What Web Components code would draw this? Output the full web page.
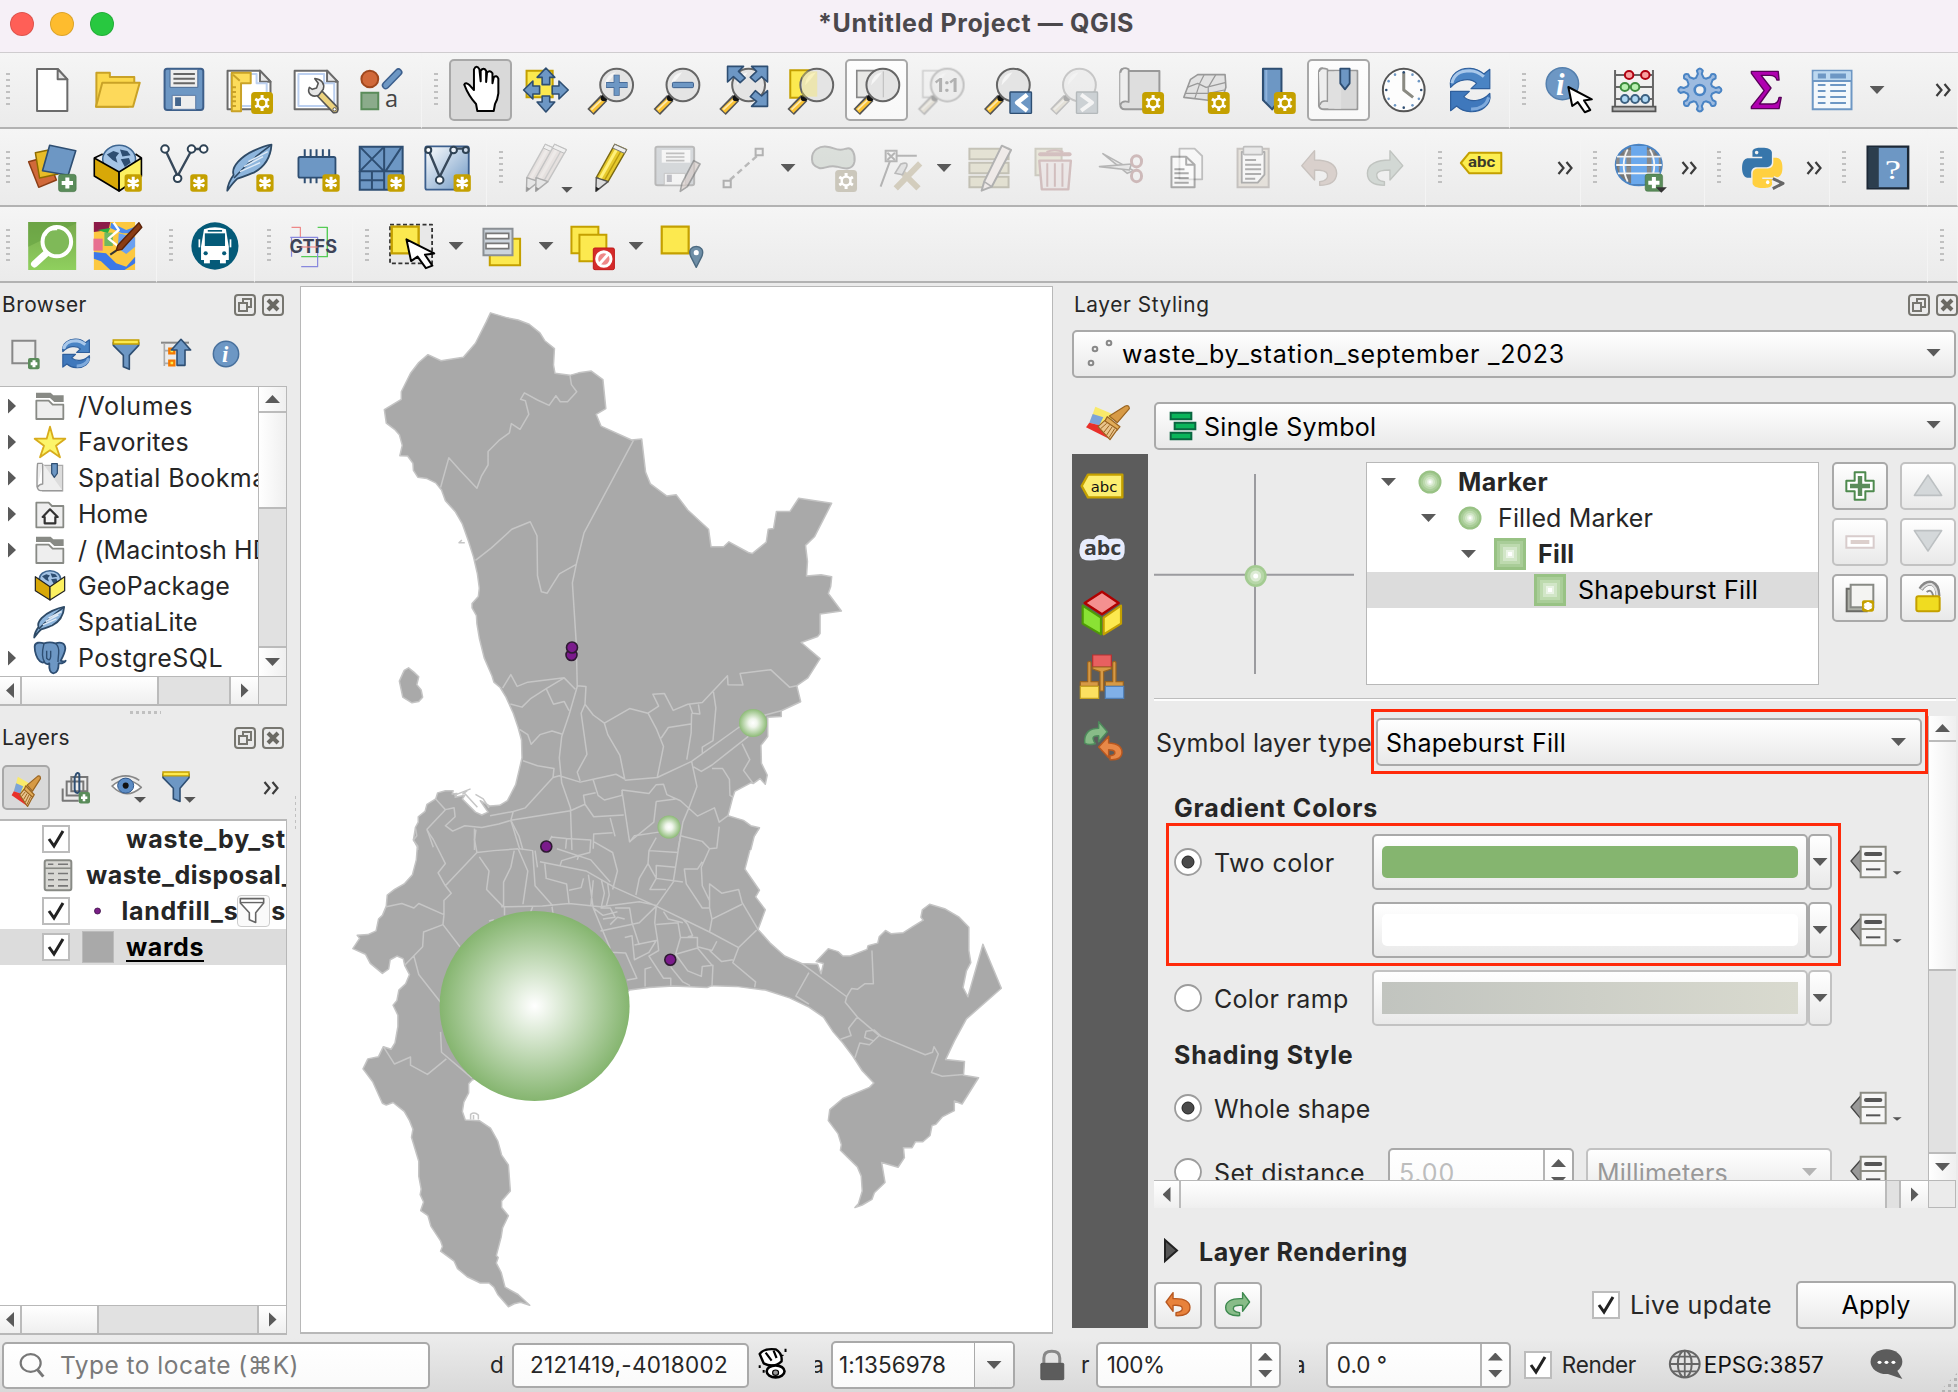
<!DOCTYPE html>
<html lang="en">
<head>
<meta charset="utf-8">
<title>*Untitled Project — QGIS</title>
<style>
html,body{margin:0;padding:0}
body{width:1958px;height:1392px;overflow:hidden;background:#ebebeb;font-family:Inter,"Liberation Sans",sans-serif;color:#262626;display:flex;flex-direction:column}
.row{display:flex;flex:none}
.main{display:flex;height:1055px;flex:none}
</style>
</head>
<body>
<title-bar></title-bar>
<div class="row" style="--h:76px">
  <q-toolbar first style="width:422px">
    <q-tool i="new"></q-tool><q-tool i="open"></q-tool><q-tool i="save"></q-tool><q-tool i="layout"></q-tool><q-tool i="manager"></q-tool><q-tool i="style"></q-tool>
  </q-toolbar>
  <q-toolbar style="width:1088px">
    <q-tool i="hand" state="down"></q-tool><q-tool i="pan"></q-tool><q-tool i="zin"></q-tool><q-tool i="zout"></q-tool><q-tool i="zfull"></q-tool><q-tool i="zsel"></q-tool><q-tool i="zlayer" state="on"></q-tool><q-tool i="znative"></q-tool><q-tool i="zlast"></q-tool><q-tool i="znext"></q-tool><q-tool i="newmap"></q-tool><q-tool i="new3d"></q-tool><q-tool i="newbm"></q-tool><q-tool i="bm" state="on"></q-tool><q-tool i="clock"></q-tool><q-tool i="refresh"></q-tool>
  </q-toolbar>
  <q-toolbar style="width:448px">
    <q-tool i="identify"></q-tool><q-tool i="abacus"></q-tool><q-tool i="gear"></q-tool><q-tool i="sigma"></q-tool><q-tool i="table"></q-tool><q-drop></q-drop><q-more slot="end" style="margin-right:5px"></q-more>
  </q-toolbar>
</div>
<div class="row" style="--h:78px;--p:2px">
  <q-toolbar first style="width:487px">
    <q-tool i="dsm"></q-tool><q-tool i="gpkg"></q-tool><q-tool i="shp"></q-tool><q-tool i="feather"></q-tool><q-tool i="chip"></q-tool><q-tool i="mesh"></q-tool><q-tool i="vlayer"></q-tool>
  </q-toolbar>
  <q-toolbar style="width:939px">
    <q-tool i="pencils"></q-tool><q-tool i="pencil"></q-tool><q-tool i="saveedit"></q-tool><q-tool i="digit"></q-tool><q-drop></q-drop><q-tool i="poly"></q-tool><q-tool i="vertex"></q-tool><q-drop></q-drop><q-tool i="multi"></q-tool><q-tool i="trash"></q-tool><q-tool i="cut"></q-tool><q-tool i="copy"></q-tool><q-tool i="paste"></q-tool><q-tool i="undo"></q-tool><q-tool i="redo"></q-tool>
  </q-toolbar>
  <q-toolbar style="width:155px"><q-tool i="label"></q-tool><q-more slot="end"></q-more></q-toolbar>
  <q-toolbar style="width:124px"><q-tool i="globe"></q-tool><q-more slot="end"></q-more></q-toolbar>
  <q-toolbar style="width:125px"><q-tool i="python"></q-tool><q-more slot="end"></q-more></q-toolbar>
  <q-toolbar style="width:98px"><q-tool i="help"></q-tool></q-toolbar>
  <q-toolbar style="width:30px"></q-toolbar>
</div>
<div class="row" style="--h:76px;--p:4px">
  <q-toolbar first style="width:157px"><q-tool i="osm"></q-tool><q-tool i="mapedit"></q-tool></q-toolbar>
  <q-toolbar style="width:98px"><q-tool i="bus"></q-tool></q-toolbar>
  <q-toolbar style="width:98px"><q-tool i="gtfs"></q-tool></q-toolbar>
  <q-toolbar style="width:1575px"><q-tool i="select"></q-tool><q-drop></q-drop><q-tool i="selform"></q-tool><q-drop></q-drop><q-tool i="desel"></q-tool><q-drop></q-drop><q-tool i="selloc"></q-tool></q-toolbar>
  <q-toolbar style="width:30px"></q-toolbar>
</div>
<div class="main">
  <left-docks></left-docks>
  <map-canvas></map-canvas>
  <styling-panel></styling-panel>
</div>
<status-bar></status-bar>

<script>
const make=(tag,html,after)=>customElements.define(tag,class extends HTMLElement{
  constructor(){super();this.attachShadow({mode:'open'})}
  connectedCallback(){
    if(this.done)return;this.done=true;
    this.shadowRoot.innerHTML=typeof html==='function'?html(this):html;
    if(after)after(this);
  }
});
const at=(e,n,d='')=>e.hasAttribute(n)?e.getAttribute(n):d;

/* Drawing grids: [origin x, origin y, units per px across, units per px down]. */
const GRID={
  A:[0,0,2.3758,3],B:[640,0,2.3758,3],C:[1290,0,2.3473,3],
  D:[0,280,3,3],E:[0,700,3,2.266],H:[1060,280,3,3],I:[1500,280,3,3],K:[1500,760,3,3],L:[400,1220,1.00642,3]
};

/* Shared parts */
const P=(d,f='none',s='none',w=2,x='')=>`<path d="${d}" fill="${f}" stroke="${s}" stroke-width="${w}" stroke-linejoin="round" ${x}/>`;
const R=(x,y,w,h,f='none',s='none',sw=2,rx=0,ry=rx)=>`<rect x="${x}" y="${y}" width="${w}" height="${h}" rx="${rx}" ry="${ry}" fill="${f}" stroke="${s}" stroke-width="${sw}"/>`;
const O=(x,y,rx,ry,f='none',s='none',w=2)=>`<ellipse cx="${x}" cy="${y}" rx="${rx}" ry="${ry}" fill="${f}" stroke="${s}" stroke-width="${w}"/>`;
const dim=(s,o=.3)=>`<g opacity="${o}">${s}</g>`;
const star=(x,y,w=52,h=66,c='#c4a000')=>{
  const cx=x+w/2,cy=y+h/2,a=w*.36,b=h*.36;let d='';
  for(let k=0;k<6;k++){const t=k*Math.PI/3+Math.PI/2;d+=`M${cx} ${cy}L${(cx+a*Math.cos(t)).toFixed(1)} ${(cy+b*Math.sin(t)).toFixed(1)}`}
  return R(x,y,w,h,c,'none',0,w*.16,h*.16)+P(d,'none','#fff',3);
};
const sun=(x,y,w=52,h=66,c='#c4a000')=>star(x,y,w,h,c)+O(x+w/2,y+h/2,w*.2,h*.2,c,'#fff',2.4);
const plus=(x,y,w=42,h=52)=>R(x,y,w,h,'#5a8c5a','#3f6f3f',.5,w*.15,h*.15)+P(`M${x+w/2} ${y+h*.18}V${y+h*.82}M${x+w*.18} ${y+h/2}H${x+w*.82}`,'none','#fff',4);
const mag=cx=>P(`M${cx-30} 294L${cx-62} 336`,'none','#555',9)+P(`M${cx-32} 298L${cx-60} 333`,'none','#fcc433',5.4)+P(`M${cx-35} 299L${cx-60} 329`,'none','#fde9b0',1.6)+O(cx-30,294,8,10,'#111')+O(cx,255,39,49,'#e4e4e4','#666',2)+P(`M${cx-28} 256Q${cx-26} 222 ${cx-2} 217Q${cx-14} 240 ${cx-28} 256`,'#f6f6f6');
const pin='#6d97c4',nv='#2e4e72';
const pencil=(o=0,g=0)=>P(`M${1463+o} 433L${1491+o} 449 ${1447+o} 545 ${1419+o} 533Z`,g?'#d8ccc8':'#e6c92c',g?'#888':'#7c6a12',1.4)+P(`M${1472+o} 438L${1428+o} 536`,'none',g?'#e8e0dc':'#fff07c',3)+P(`M${1482+o} 444L${1438+o} 542`,'none',g?'#999':'#b89a10',1.4)+P(`M${1419+o} 533L${1447+o} 545 ${1418+o} 574Z`,'#ddd','#555',1.4)+P(`M${1418+o} 560L${1427+o} 566 ${1418+o} 574Z`,'#222')+P(`M${1463+o} 433L${1491+o} 449 ${1486+o} 460 ${1458+o} 444Z`,'#eee','#777',1);
const arrow=(x,y,s=1,t=1,w=2)=>P(`M${x} ${y}L${x+10*s} ${y+68*t} ${x+24*s} ${y+54*t} ${x+42*s} ${y+90*t} ${x+56*s} ${y+82*t} ${x+40*s} ${y+48*t} ${x+60*s} ${y+44*t}Z`,'#fff','#000',w);
const refresh=P('M377 262C372 222 400 203 423 205C440 206 448 214 455 222L469 208V266H425L438 250C425 232 395 236 377 262Z','#4a84c4','#2f5f9c',1.2)+P('M380 250C384 222 400 212 423 212C438 213 446 220 455 230','none','#a9c8ea',3)+P('M469 280C474 318 446 337 423 335C406 334 398 326 391 318L377 332V274H421L408 290C421 308 450 306 469 280Z','#3f78bc','#2f5f9c',1.2)+P('M466 292C462 316 444 328 425 327','none','#7faadc',3);
const feather=P('M540 572C541 552 546 540 555 525C548 500 575 468 603 452C620 442 635 436 645 434C643 470 630 500 603 518C590 524 580 530 564 536C556 545 548 558 540 572Z','#8db5dc','#2e4a66',1.8)+P('M556 534C580 500 610 466 643 436','none','#2e4a66',1.6)+P('M580 500L625 470M570 515L618 488M590 485L636 455','none','#dfeaf6',1.5);
const world=(cx,cy,rx,ry)=>O(cx,cy,rx,ry,'#a4c4e6','#3d6590',1.5)+P(`M${cx-rx*.75} ${cy-ry*.35}l${rx*.4} ${-ry*.25} ${rx*.35} ${ry*.15} ${-rx*.2} ${ry*.3} ${rx*.1} ${ry*.4} ${-rx*.3} ${-ry*.2}ZM${cx+rx*.05} ${cy-ry*.7}l${rx*.45} ${ry*.1} ${rx*.2} ${ry*.3} ${-rx*.5} ${ry*.1}ZM${cx+rx*.1} ${cy}l${rx*.5} ${-ry*.1} ${rx*.1} ${ry*.35} ${-rx*.35} ${ry*.3}Z`,'#2e4e72');
const bookmark=P('M77 205Q68 203 68 218V318Q70 328 80 328H158V212H84','#e4e4e4','#999',2)+P('M68 215Q72 200 88 208V304Q74 300 70 315','#eee','#999',1.6)+R(104,214,52,112,'#d8d8d8')+R(90,214,30,112,'#e0e0e0')+P('M118 206H140V250L129 268 118 250Z',pin,nv,1.8);
const ddIcon=P('M1053 303L1082 270V338Z','#999','#444',1.3)+R(1082,260,75,92,'#f6f6f6','#8a8a82',2)+P('M1082 303H1157','none','#8a8a82',2)+P('M1098 282H1141','none','#555',4,'stroke-linecap="round"')+P('M1098 328H1141','none','#555',2);
const brush=P('M106 380L166 406 140 440 90 425Z','#f9ea6a')+P('M98 402L130 412 118 436 88 428Z','#7da4d8')+P('M88 428L118 436 150 478 78 442Z','#e8302a')+P('M148 408L196 378Q208 374 208 386L172 428Z','#d79a45','#9a6420',1.2)+P('M142 410L180 440 172 450 134 424Z','#e2ac58','#9a6420',1.2)+P('M134 422L172 448 150 479 114 440Z','#e9c48c','#9a6420',1.2)+P('M140 430L122 446M148 436L132 456M156 441L140 465M164 446L147 473','none','#9a6420',1);

/* name: [grid, left, top, size, artwork] — left/top/size in px */
const ICONS={
new:['A',28,66,48,P('M88 207H137L160 238V333H88Z','#fff','#6b6b6b',2)+P('M137 207V238H160Z','#e4e4e4','#6b6b6b',2)],
open:['A',94,66,48,P('M229 218H261V231H319V250L305 320H229Z','#fbd84c','#c9a227',2)+P('M243 248H332L316 320H228Z','#fdd95a','#c9a227',2)],
save:['A',160,66,48,R(391,206,92,124,pin,'#3d5f8a',2,6,8)+R(404,208,66,54,'#eee','#4a6a94',1)+P('M412 222H463M412 236H463M412 250H463','none','#666',2)+R(409,286,56,42,'#eee','#5b7aa3',1)+R(416,292,14,26,'#44658c')],
layout:['A',227,66,48,P('M543 212H620L645 245V328H543Z','#fff','#6b6b6b',2)+P('M620 212V245H645Z','#e8e8e8','#6b6b6b',2)+P('M552 222H612V250H636V318H552Z','none','#bcd0f0',2)+P('M553 218H598V250H575V334H553Z','#fcdc5b','#c9a227',2)+P('M553 262H563M553 276H563M553 290H563M553 304H563M553 318H563M556 224L572 242','none','#c9a227',2)+sun(599,276)],
manager:['A',292,66,48,P('M700 212H777L802 245V328H700Z','#fff','#6b6b6b',2)+P('M777 212V245H802Z','#e8e8e8','#6b6b6b',2)+P('M709 222H770V250H794V318H709Z','none','#bcd0f0',2)+P('M764 272L802 322Q806 340 792 338L754 288Z','#ecd27e','#555',1.6)+P('M735 262C728 285 745 292 757 286L768 268C772 252 765 238 748 236L756 250 752 264 742 268Z','#e6e6e6','#555',1.6)+O(795,328,4,5,'#fff','#555',1)],
style:['A',359,66,48,O(881,237,20,25,'#d1693a','#a0481e',2)+P('M919 256L949 217','none','#3c5f8d',8,'stroke-linecap="round"')+P('M919 256L949 217','none',pin,5,'stroke-linecap="round"')+R(861,278,40,50,'#8bab8b','#5a8c5a',2)+'<g transform="scale(1 1.263)"><text x="917" y="254" font-family="Open Sans,sans-serif" font-size="56" fill="#444">a</text></g>'],
hand:['A',456,66,48,P('M1134 333L1131 312C1122 300 1112 284 1103 254Q1106 244 1116 256L1126 270V208Q1132 192 1139 208L1142 244V212Q1149 200 1155 212V246L1157 218Q1164 208 1170 220V250L1173 232Q1180 224 1184 236V280Q1182 300 1176 312L1173 333Z','#fff','#000',2)],
pan:['A',522,66,48,R(1251,212,62,80,'#fce94f','#c4a000',2)+P('M1297 204L1318 232H1306V254H1288V232H1276ZM1297 336L1318 306H1306V288H1288V306H1276ZM1244 270L1266 243V258H1282V282H1266V297ZM1350 270L1328 243V258H1312V282H1328V297Z',pin,nv,1.6)],
zin:['A',588,66,48,mag(1465)+P('M1465 224V287M1440 255H1491','none','#3c5f8d',6)+P('M1465 226V285M1441 255H1490','none',pin,4.6)],
zout:['B',654,66,48,mag(102)+R(77,247,50,16,pin,'#3c5f8d',1,3)],
zfull:['B',720,66,48,mag(258)+P('M208 199H246L234 214 250 234 238 248 222 230 208 246ZM303 199H265L277 214 262 232 274 246 289 230 303 246ZM303 319H265L277 304 262 290 274 272 289 288 303 272Z',pin,nv,1.6)],
zsel:['B',786,66,48,R(357,211,64,82,'#fce94f','#c4a000',2)+mag(420)+'<g opacity=".35">'+R(385,214,36,76,'#fce94f')+'</g>'],
zlayer:['B',852,66,48,R(515,212,64,80,'#e8e8e6','#888',1.6)+mag(577)+P('M578 214V292','none','#bbb',1)],
znative:['B',918,66,48,'<g opacity=".33" style="filter:grayscale(.8)">'+R(672,212,64,80,'#eee','#888',1.6)+mag(730)+'<g transform="scale(1 1.263)"><text x="698" y="218" font-family="Open Sans,sans-serif" font-weight="700" font-size="48" textLength="62" fill="#333">1:1</text></g></g>'],
zlast:['B',984,66,48,mag(887)+R(879,276,51,64,pin,'#2e4e72',1.4,2)+P('M920 284L896 308 920 332','none','#fff',4.5)],
znext:['B',1050,66,48,'<g style="filter:grayscale(.8)" opacity=".3">'+mag(1044)+'</g>'+R(1037,276,50,64,'#ccd1d4','#b4b9bb',1.4,2)+P('M1048 284L1074 308 1048 332','none','#f4f4f4',4)],
newmap:['B',1116,66,48,P('M1150 206Q1141 205 1141 220V312Q1141 328 1152 328H1234V213H1160','#dedede','#999',2)+P('M1141 218Q1146 198 1161 208V306Q1146 300 1141 314','#eee','#999',1.8)+sun(1193,276)],
new3d:['B',1182,66,48,P('M1325 224L1390 224 1392 262 1380 308 1345 300 1292 292 1308 238Z','#e2e2e2','#999',1.6)+P('M1300 262L1325 250 1345 262 1390 248M1340 225L1330 250 1318 296M1368 224L1350 262 1350 300M1296 280L1350 280 1388 270','none','#999',1.2)+sun(1349,276)],
newbm:['B',1248,66,48,P('M1480 206H1524V290L1502 328 1480 300Z',pin,nv,2)+P('M1488 210V304','none','#8fb3dc',2)+sun(1506,276)],
bm:['C',1314,66,48,bookmark],
clock:['C',1380,66,48,O(267,270,49,64,'#fdfdfd','#555',2)+P('M267 218V270L289 292','none','#8a8a82',3)+[...Array(12)].map((_,k)=>{const t=k*Math.PI/6;return O((267+41*Math.cos(t)).toFixed(1),(270+53*Math.sin(t)).toFixed(1),3,4,k%3?pin:nv)}).join('')],
refresh:['C',1446,66,48,refresh],
identify:['C',1543,66,48,O(637,251,38,48,pin,'#5580ae',1.5)+'<g transform="scale(1 1.278)"><text x="622" y="222" font-family="Liberation Serif,serif" font-style="italic" font-weight="700" font-size="72" fill="#fff">i</text></g>'+arrow(651,261,.92,.84)],
abacus:['C',1610,66,48,P('M763 210V320M852 210V320M763 225H852M763 261H852M763 297H852','none','#666',2)+O(796,225,10,12,'#f8a0a0','#b00010',2)+O(834,225,10,12,'#f8a0a0','#b00010',2)+O(786,261,10,12,'#b8f0b0','#3e8c3e',2)+O(810,261,10,12,'#b8f0b0','#3e8c3e',2)+O(786,297,9,12,'#b0d8f4','#3c6080',2)+O(810,297,9,12,'#b0d8f4','#3c6080',2)+O(834,297,9,12,'#b0d8f4','#3c6080',2)+R(757,320,101,14,'#bbb','#555',1.8)],
gear:['C',1676,66,48,(()=>{let d='';for(let k=0;k<8;k++){const t=k*Math.PI/4-Math.PI/2;const p=(r,a)=>`${(962+r*Math.cos(t+a)).toFixed(1)} ${(270+r*1.278*Math.sin(t+a)).toFixed(1)}`;d+=(k?'L':'M')+p(30,-.3)+'L'+p(38,-.12)+'L'+p(46,-.15)+'Q'+p(56,0)+' '+p(46,.15)+'L'+p(38,.12)+'L'+p(30,.3)}return P(d+'Z','#9dbbe0','#4a84c4',2)})()+O(962,270,12,15,'#f0f0f0','#4a84c4',2.6)],
sigma:['C',1742,66,48,P('M1083 214H1146L1148 240H1143Q1140 226 1126 226H1106L1129 264 1102 312H1132Q1146 312 1148 292H1153L1148 326H1083V320L1113 272 1083 220Z','#b000b0','#5a005a',1.4)],
table:['C',1808,66,48,R(1227,212,91,116,'#f4f8fb',pin,2)+R(1229,214,87,28,'#bcd8f0')+P('M1227 243H1318','none',pin,2)+P('M1239 228H1258M1268 228H1305','none',pin,5)+P('M1239 255H1257M1268 255H1305M1239 273H1257M1268 273H1305M1239 291H1257M1268 291H1305M1239 309H1257M1268 309H1305','none',pin,2)],
dsm:['A',28,144,48,P('M68 485L112 470 134 540 92 562Z','#d1693a','#8c3e16',1.5)+P('M84 458L124 448 138 522 94 534Z','#e8bc28','#8f6c00',1.5)+P('M118 436L180 452 162 526 101 512Z',pin,nv,1.6)+plus(139,523)],
gpkg:['A',94,144,48,world(283,478,39,42)+P('M224 474L283 516V573L224 528Z','#d8a808','#000',1.6)+P('M283 516L336 474V528L283 573Z','#fcf060','#000',1.6)+P('M224 474L244 462M336 474L322 462','none','#000',1.6)+star(296,523,41,52)],
shp:['A',160,144,48,P('M395 456L422 528 453 456M463 447H476','none','#37485a',2.4)+O(392,447,9,11,'#fff','#2e4254',2)+O(422,535,9,11,'#fff','#2e4254',2)+O(455,447,9,11,'#fff','#2e4254',2)+O(484,447,9,11,'#fff','#2e4254',2)+star(452,523,41,52)],
feather:['A',226,144,48,feather+star(609,523,41,52)],
chip:['A',292,144,48,P('M724 448V472M738 448V472M752 448V472M767 448V472M782 448V472M724 530V550M738 530V550M752 530V550','none',nv,2)+R(709,471,88,62,pin,nv,1.8,4,5)+star(766,523,41,52)],
mesh:['A',359,144,48,R(857,440,102,129,pin,nv,2)+P('M857 514H959M915 440V569M857 440L915 514 857 514 915 440M918 514L957 440M886 514V569M857 541H915','none',nv,2)+star(923,523,41,52)],
vlayer:['A',425,144,48,'<defs><linearGradient id="g" x1="0" y1="0" x2="1" y2="1"><stop offset="0" stop-color="#fff"/><stop offset="1" stop-color="#6d97c4"/></linearGradient></defs>'+R(1013,439,103,130,'url(#g)','#3c5f8d',1.8,4,5)+P('M1021 452L1047 530 1078 452M1088 446H1104','none','#37485a',2.4)+O(1047,540,9,11,'#fff','#2e4254',2)+O(1080,450,8,10,'#e8eef6','#2e4254',2)+O(1020,450,7,9,'#fff','#2e4254',2)+O(1109,450,7,9,'#cfdcec','#2e4254',2)+star(1080,523,41,52)],
pencils:['A',522,144,48,dim(pencil(-165,1)+pencil(-143,1),.42)+P('M1336 561H1363L1349 578Z','#555')],
pencil:['A',588,144,48,pencil()],
saveedit:['B',654,144,48,dim(R(39,440,92,116,'#a4acb4','#555',2,5,6)+R(54,450,68,38,'#fff')+P('M64 460H108M64 471H108M64 482H108','none','#666',1.6)+R(60,520,50,35,'#fff','#777',1)+R(66,524,12,22,'#667'),.35)+dim(P('M130 482L145 492 115 560 98 574 102 550Z','#d8ccc8','#777',1.6),.6)],
digit:['B',720,144,48,dim(P('M216 540L280 468','none','#777',2.4,'stroke-dasharray="6 4"')+R(201,542,17,20,'#eee','#666',2)+R(277,446,17,20,'#eee','#666',2),.45)],
poly:['B',810,144,48,dim(P('M411 478C410 448 430 438 446 440C465 442 470 456 492 446C508 440 514 465 512 485C508 510 490 508 470 500C450 494 440 508 428 504C416 500 411 490 411 478Z','#b9c4b9','#666',2),.4)+sun(466,510,52,66,'#cbc7bb')],
vertex:['B',876,144,48,dim(R(586,452,26,32,'none','#555',2)+P('M590 458L608 480M608 458L590 480M612 467H660M596 484L574 560','none','#555',2)+P('M668 490L610 565M628 520L664 565','none','#a89870',6)+P('M608 520L622 492Q640 484 636 500L626 524Z','#ccc','#666',1.6),.38)],
multi:['B',966,144,48,dim(R(785,446,93,32,'#d5d0b0','#8f8a70',2)+R(785,488,93,32,'#d5d0b0','#8f8a70',2)+R(785,530,93,32,'#d5d0b0','#8f8a70',2)+P('M862 437L884 450 838 560 814 572 820 545Z','#efe4e0','#666',2)+P('M820 545L838 560','none','#666',1.6),.45)],
trash:['B',1032,144,48,dim(R(942,446,62,80,'#d8d3b0','#8f8a70',2)+P('M953 463H1023','none','#a06a6a',4,'stroke-linecap="round"')+P('M968 456Q988 446 1008 456','none','#a06a6a',2)+P('M951 482H1026L1020 568H957Z','#e4d8d8','#a06a6a',2.4)+P('M970 490V560M988 490V560M1006 490V560','none','#a06a6a',2),.36)],
cut:['B',1098,144,48,dim(P('M1102 461L1175 512 1160 520Z','#ddd','#666',1.6)+P('M1094 500L1170 492 1165 510Z','#ddd','#666',1.6)+O(1182,484,12,17,'none','#a07070',3)+O(1182,528,12,17,'none','#a07070',3),.42)],
copy:['B',1164,144,48,dim(P('M1284 446H1320L1338 468V538H1284Z','#fff','#777',1.8),.4)+dim(P('M1265 470H1300L1320 494V562H1265Z','#fff','#666',2)+P('M1300 470V494H1320M1272 508H1296M1272 520H1306M1272 534H1306M1272 548H1306','none','#666',2),.5)],
paste:['B',1230,144,48,dim(R(1422,446,74,116,'#d8cfc0','#8f8780',2)+P('M1432 456H1486V524L1470 548H1432Z','#fff','#555',1.8)+R(1436,440,45,24,'#ddd','#777',1.6,3)+P('M1440 480H1466M1440 494H1478M1440 508H1478M1440 522H1478M1440 536H1464','none','#555',2),.42)],
undo:['C',1296,144,48,P('M30 497L60 452V480C90 480 111 492 112 520C111 545 98 556 72 556V545C88 543 92 532 90 522C88 512 76 510 60 510V540Z','#d9d0cc','#c8c2be',1.4)],
redo:['C',1362,144,48,P('M267 497L237 452V480C207 480 184 492 184 520C184 545 198 556 224 556V545C208 543 205 532 206 522C208 512 220 510 237 510V540Z','#d2d8d4','#c0c4c0',1.4)],
label:['C',1460,144,48,P('M421 458H496V520H421L401 489Z','#fcee50','#c4a000',2)+'<g transform="scale(1 1.278)"><text x="418" y="392" font-family="Roboto,sans-serif" font-weight="700" font-size="33" textLength="64" lengthAdjust="spacingAndGlyphs" fill="#3a3a2a">abc</text></g>'],
globe:['C',1616,144,48,O(821,495,54,61,'#777','#4a84c4',2)+P('M786 450H858V466H786ZM770 472H872V494H768V480ZM772 500H872L866 518H776Z','#8a8a8a')+P('M803 438H840V552H803Z','#6aa8ec')+P('M776 472H792V518H776ZM851 472H868V518H851Z','#6aa8ec')+P('M795 448Q776 495 795 545M847 448Q868 495 847 545M768 495H875M770 470H873M772 520H870','none','#f4f4f4',1.8)+plus(836,522,41,52)+P('M861 562H887L874 578Z','#333')],
python:['C',1741,144,48,'<g transform="translate(1066 443) scale(3.92 5.04)">'+P('M14.25.18l.9.2.73.26.59.3.45.32.34.34.25.34.16.33.1.3.04.26.02.2-.01.13V8.5l-.05.63-.13.55-.21.46-.26.38-.3.31-.33.25-.35.19-.35.14-.33.1-.3.07-.26.04-.21.02H8.77l-.69.05-.59.14-.5.22-.41.27-.33.32-.27.35-.2.36-.15.37-.1.35-.07.32-.04.27-.02.21v3.06H3.17l-.21-.03-.28-.07-.32-.12-.35-.18-.36-.26-.36-.36-.35-.46-.32-.59-.28-.73-.21-.88-.14-1.05-.05-1.23.06-1.22.16-1.04.24-.87.32-.71.36-.57.4-.44.42-.33.42-.24.4-.16.36-.1.32-.05.24-.01h.16l.06.01h8.16v-.83H6.18l-.01-2.75-.02-.37.05-.34.11-.31.17-.28.25-.26.31-.23.38-.2.44-.18.51-.15.58-.12.64-.1.71-.06.77-.04.84-.02 1.27.05zm-6.3 1.98l-.23.33-.08.41.08.41.23.34.33.22.41.09.41-.09.33-.22.23-.34.08-.41-.08-.41-.23-.33-.33-.22-.41-.09-.41.09z','#3776ab')+P('M21.1 6.11l.28.06.32.12.35.18.36.27.36.35.35.47.32.59.28.73.21.88.14 1.04.05 1.23-.06 1.23-.16 1.04-.24.86-.32.71-.36.57-.4.45-.42.33-.42.24-.4.16-.36.09-.32.05-.24.02-.16-.01h-8.22v.82h5.84l.01 2.76.02.36-.05.34-.11.31-.17.29-.25.25-.31.24-.38.2-.44.17-.51.15-.58.13-.64.09-.71.07-.77.04-.84.01-1.27-.04-1.07-.14-.9-.2-.73-.25-.59-.3-.45-.33-.34-.34-.25-.34-.16-.33-.1-.3-.04-.25-.02-.2.01-.13v-5.34l.05-.64.13-.54.21-.46.26-.38.3-.32.33-.24.35-.2.35-.14.33-.1.3-.06.26-.04.21-.02.13-.01h5.84l.69-.05.59-.14.5-.21.41-.28.33-.32.27-.35.2-.36.15-.36.1-.35.07-.32.04-.28.02-.21V6.07h2.09l.14.01z','#ffd040')+'</g>'+O(1126,547,4,6,'#fff')+P('M1138 536L1162 550 1138 564','none','#f0f0f0',6)+P('M1138 536L1162 550 1138 566','none','#666',3)],
help:['C',1864,144,48,R(1356,440,95,125,pin,'#1c2836',2.4)+R(1358,442,24,121,'#2c3e4e')+'<g transform="scale(1 1.278)"><text x="1396" y="420" font-family="Liberation Serif,serif" font-size="66" textLength="38" lengthAdjust="spacingAndGlyphs" fill="#fff">?</text></g>'],
osm:['A',28,222,48,'<defs><linearGradient id="o" x1="0" y1="0" x2="0" y2="1"><stop offset="0" stop-color="#78a94d"/><stop offset="1" stop-color="#8fd05e"/></linearGradient></defs>'+R(67,666,114,144,'url(#o)')+P('M67 666H181V670L67 740Z','#5f9e3e','none',0,'opacity=".5"')+P('M108 762L82 792','none','#fff',7,'stroke-linecap="round"')+O(135,725,34,44,'#7fb958','#fff',4)+P('M108 706Q114 686 136 688','none','#fff',2)],
mapedit:['A',94,222,48,R(223,666,98,144,'#fcc840')+P('M223 666H262L258 690 223 696Z','#8c1a48')+P('M232 690L262 684 256 700Z','#2ab040')+P('M264 668L300 690 321 680V700L290 700 262 684Z','#4a8af0')+R(222,716,22,36,'#e87090')+R(248,698,20,40,'#70b860')+P('M223 756L252 760 276 790 300 800 321 770V790L296 810H262L240 784 223 776Z','#3c78e8')+P('M270 668L282 690 258 716 282 740 321 730','none','#fff',2.4)+P('M282 700L321 712V740L300 762 280 745Z','#6aa0f0')+P('M330 668L337 682 290 748 276 752 280 736Z','#8a3c14','#5a2208',1.4)+P('M276 752L262 764','none','#333',2)],
bus:['A',192,222,48,O(513,738,56,71,'#045a78')+P('M487 688Q513 676 539 688L546 740V780H480V740Z','#fff')+R(489,700,48,38,'#045a78')+R(496,690,34,5,'#045a78')+R(487,776,14,14,'#fff')+R(525,776,14,14,'#fff')+O(491,760,5,6,'#045a78')+O(535,760,5,6,'#045a78')+R(474,718,4,24,'#fff')+R(548,718,4,24,'#fff')],
gtfs:['A',290,222,48,P('M695 682H716V712','none','#e88',1.2)+P('M757 682H780V770H718','none','#5c5',1.4)+P('M692 712H757V800H718M695 712V770','none','#88d',1.2)+'<g transform="scale(1 1.263)"><text x="690" y="602" font-family="Inter,sans-serif" font-weight="700" font-size="43" textLength="113" lengthAdjust="spacingAndGlyphs" fill="#3e4458">GTFS</text></g>'+P('M718 741H757','none','#e88',1.2)],
select:['A',388,222,48,P('M929 674H1029V790H929Z','#e8e8e8','#333',1.8,'stroke-dasharray="4 2.5"')+R(933,680,64,80,'#fce94f','#c4a000',2.4)+arrow(968,718,1.1,.96)],
selform:['A',478,222,48,R(1166,716,72,80,'#fce94f','#c4a000',2)+R(1151,686,69,80,'#ccd4dc','#8a8f94',2)+R(1157,700,54,16,'#fff','#777',1.6)+R(1157,730,54,16,'#fff','#777',1.6)],
desel:['A',568,222,48,R(1360,680,64,80,'#fce94f','#c4a000',2)+R(1379,704,64,80,'#fce94f','#c4a000',2)+R(1412,744,50,65,'#d42a2a','#c01818',1,4)+O(1437,777,17,22,'#e88','#fff',3)+P('M1449 760L1425 794','none','#fff',3)],
selloc:['B',658,222,48,R(54,680,64,80,'#fce94f','#c4a000',2.2)+P('M136 802L123 770C116 748 126 740 136 739C146 740 156 748 149 770Z','#6e8ea6','#4c6a80',1.4)+O(136,758,6,8,'#fff')],
addlayer:['D',10,338,32,R(37,182,69,68,'#ececec','#888',2)+R(84,234,35,34,'#5a8c5a','none',0,6)+P('M102 241V262M92 251H112','none','#fff',3)],
refresh2:['D',60,338,32,'<g transform="translate(-138 42) scale(.866 .66)">'+refresh+'</g>'],
filter:['D',110,338,32,P('M340 188H416V196L388 226V268L370 260V226L340 196Z',pin,nv,1.6)+R(340,180,76,12,'#fce94f','#c4a000',1.6)],
collapse:['D',161,338,32,P('M486 188H570','none','#888',2)+P('M496 190V258M496 212H512M496 250H512','none','#aaa',1.6)+R(511,206,15,14,'#fce94f','#f57900',2.4)+R(511,242,15,14,'#fce94f','#f57900',2.4)+P('M546 178L575 210H558V256H534V210H517Z',pin,nv,1.6)],
info:['D',210,338,32,O(678,222,38,38,pin,'#48709c',1.5)+'<text x="666" y="245" font-family="Liberation Serif,serif" font-style="italic" font-weight="700" font-size="68" fill="#fff">i</text>'],
folder:['D',34,390,32,P('M108 338H152L160 346H191V366H163L150 354H108Z','#888a85')+P('M109 362H146L158 374H190V417H109Z','#eee','#888a85',1.8)],
fav:['D',34,426,32,P('M150 440L160 476H196L168 497 180 532 150 511 120 532 132 497 104 476H140Z','#fcf56a','#d8ac1c',1.8)],
bms:['D',34,462,32,R(128,556,60,77,'#dcdcdc','#aaa',1.2)+P('M128 550H113Q111 560 111 620 114 632 122 632H188M128 552V612Q118 612 112 622','#eee','#999',1.4)+P('M155 551H172V580L163 592 155 580Z',pin,nv,1.2)],
home:['D',34,498,32,P('M109 668H146L156 678H190V742H109Z','#eee','#888a85',1.8)+P('M128 711L150 688 173 711H166V730H134V711Z','#f6f6f6','#333',2.2)],
gp:['D',34,570,32,world(150,898,32,26)+P('M106 890L150 920V960L106 932Z','#d8a808','#222',1.2)+P('M150 920L194 890V932L150 960Z','#fcf060','#222',1.2)],
sl:['D',34,606,32,'<g transform="translate(-359 692) scale(.855 .665)">'+feather+'</g>'],
pg:['D',34,642,32,P('M104 1100C104 1086 120 1086 132 1090Q150 1084 166 1090C184 1084 196 1090 196 1106C194 1122 184 1138 182 1142Q190 1146 197 1142Q190 1152 176 1150Q176 1180 160 1180Q146 1178 148 1150Q140 1156 132 1146Q128 1150 120 1144C110 1136 104 1116 104 1100Z',pin,'#2e4e72',1.8)+P('M132 1090Q122 1130 134 1146M166 1090Q178 1100 176 1120T174 1146M140 1112V1135Q150 1146 152 1130V1112','none','#2e4e72',1.4)],
brush2:['E',10,770,32,'<g transform="translate(-17 -89) scale(.665 .68)">'+brush+'</g>'],
group:['E',60,770,32,P('M188 196V224H236','none','#777',2)+R(200,180,50,32,'none','#777',2)+R(214,170,48,32,'none','#777',2)+P('M224 168V196Q224 206 232 206T238 196V164Q236 160 232 161T226 168','none',nv,2)+R(236,204,34,26,'#5a8c5a','none',0,6,5)+P('M252 209V225M243 217H262','none','#fff',2.6)],
eye:['E',110,770,36,P('M334 182Q378 162 418 182','none','#888',1.6)+P('M336 195Q378 166 424 198Q378 228 336 195Z','#fff','#888',1.6)+O(377,194,24,17,'#5c8cc4','#30588c',1)+O(377,194,9,7,'#111')+P('M402 220H438L420 233Z','#555')],
filter2:['E',160,770,36,P('M489 168H567V176L540 200V230L520 224V200L489 176Z',pin,nv,1.6)+R(489,163,78,9,'#fce94f','#c4a000',1.4)+P('M552 220H587L569 233Z','#555')],
tbl:['E',43,858,32,R(134,361,80,68,'#d8d8d4','#888a85',2,6,5)+P('M134 379H214','none','#888a85',1.6)+P('M144 370H160M174 370H204M144 391H162M174 391H204M144 405H162M174 405H204M144 419H162M174 419H204','none','#777',1.6)],
find:['E',18,1348,32,O(92,1500,30,20,'none','#777',2.2)+P('M112 1515L130 1531','none','#777',3)],
fnl:['E',246,896,30,P('M745 450H815V460L791 482V504L772 498V482L745 460Z','#fff','#666',1.6)+P('M745 459H815','none','#666',1.4)],
brush:['H',1078,398,50,brush],
lab:['H',1078,462,48,P('M84 584H187V652H84L65 618Z','#fcee70','#c4a000',2.4)+'<text x="92" y="636" font-family="DejaVu Sans,sans-serif" font-size="40" textLength="80" lengthAdjust="spacingAndGlyphs" fill="#111">abc</text>'],
mask:['H',1078,525,48,P('M84 776Q98 776 102 778Q110 762 130 766Q140 770 146 778Q160 774 180 776Q196 784 194 808Q196 836 174 840Q160 842 152 838Q140 842 120 838Q84 846 66 836Q54 822 60 800Q62 778 84 776Z','#e8ecfc')+'<text x="72" y="825" font-family="Open Sans,sans-serif" font-weight="700" font-size="60" textLength="112" lengthAdjust="spacingAndGlyphs" fill="#3a3a3a">abc</text>'],
cube:['H',1078,590,48,P('M126 938L176 972 126 1006 74 972Z','#f49090','#b00000',2.4)+P('M68 980L123 1016V1066L68 1034Z','#8ae234','#4e9a06',2.2)+P('M183 980L131 1016V1066L183 1034Z','#fce94f','#c4a000',2.2)],
brushes:['H',1078,654,48,[88,163].map((x,k)=>P(`M${x-5} 1150Q${x} 1144 ${x+5} 1150V1208H${x+27}V1222H${x-27}V1208H${x-5}Z`,'#d79a45','#9a6420',1.2)+R(x-27,1222,55,36,k?'#80b0e8':'#fce060',k?'#5080b8':'#c8a420',1.2)).join('')+R(98,1128,56,36,'#e86060','#b83030',1.2)+P('M98 1164H154V1170L131 1178V1236H120V1178L98 1170Z','#d79a45','#9a6420',1.2)],
hist:['H',1078,718,48,P('M74 1392C72 1360 90 1348 116 1348V1328L142 1358 116 1388V1370C98 1370 94 1376 106 1394Q84 1400 74 1392Z','#88bc88','#4e8a5c',1.5)+P('M116 1404L146 1372V1392C172 1392 186 1404 186 1420C186 1436 172 1444 150 1442V1430Q168 1428 164 1418Q160 1412 146 1412V1436Z','#e88848','#b85820',1.5)],
single:['H',1168,410,32,R(332,398,62,20,'#0ab45a','#0a6640',2)+R(344,428,62,20,'#0ab45a','#0a6640',2)+R(332,458,62,20,'#0ab45a','#0a6640',2)],
pts:['H',1086,338,32,O(105,207,7,7,'#eee','#888',2)+O(147,189,7,7,'#eee','#888',2)+O(93,249,7,7,'#eee','#888',2)],
add:['I',1844,470,32,P('M1064 577H1096V602H1121V634H1096V659H1064V634H1039V602H1064Z','#fff','#4e8a4e',2)+P('M1080 588V648M1050 618H1110','none','#5a8c5a',4.4)],
rem:['I',1844,526,32,R(1039,769,82,34,'#fff','#d8cccc',2)+R(1052,780,56,12,'#dccfcc')],
dup:['I',1844,582,32,R(1040,926,60,68,'#aeb0a8','#6a6a66',2)+R(1052,914,68,68,'#f4f4f2','#888a85',2)+star(1086,961,36,34)],
up:['I',1912,470,32,P('M1284 585L1325 646H1243Z','#d4d8da','#bcc0c2',1.6)],
down:['I',1912,526,32,P('M1284 813L1325 752H1243Z','#d4d8da','#bcc0c2',1.6)],
lock:['I',1912,582,32,P('M1262 928Q1276 906 1296 910Q1314 916 1314 948','none','#888',5)+P('M1264 928Q1278 910 1294 912Q1310 920 1312 948','none','#ddd',2)+P('M1280 936Q1294 924 1300 948','none','#888',2)+R(1249,949,70,45,'#f0dc20','#c4a000',2,6)],
dd:['K',1848,837,50,ddIcon+P('M1178 334H1205L1191 344Z','#555')],
ub:['L',1160,1285,36,P('M771 240L778 212V230C790 228 795 240 795 256C795 274 790 282 781 281V272C787 270 788 262 787 256Q786 248 778 250V268Z','#e8823c','#b85820',1.4)],
rb:['L',1220,1285,36,P('M855 240L848 212V230C836 228 831 240 831 256C831 274 836 282 845 281V272C839 270 838 262 839 256Q840 248 848 250V268Z','#88bc88','#3f8a50',1.4)],
mouse:['L',757,1348,34,P('M362 402Q366 384 378 388Q385 400 384 424Q376 446 366 430Z','#fff','#000',2.4)+P('M368 398L374 422M376 392L379 414','none','#000',2.2)+O(378,454,9,18,'#fff','#000',2.6)+O(378,458,3,8,'#999','#000',1.2)+P('M388 386V396M385 404V408M362 436V444M366 450V458','none','#000',2)],
plock:['L',1034,1347,36,P('M648 432V414Q648 394 656 394T664 414V432','none','#888',3)+R(645,430,23,49,'#5c5c5c','#555',1,1,3)],
crs:['L',1665,1347,36,O(1292,432,15,40,'none','#666',2)+O(1292,432,7,40,'none','#666',2)+P('M1292 392V472M1277 432H1307M1280 410H1304M1280 454H1304','none','#666',1.8)],
msg:['L',1867,1347,38,O(1495,428,16,37,'#5c5c5c')+P('M1490 458L1511 480 1504 446Z','#5c5c5c')+O(1488,430,2,5,'#fff')+O(1495,430,2,5,'#fff')+O(1502,430,2,5,'#fff')]
};
make('q-icon',e=>{
  const [g,x,y,s,art]=ICONS[e.getAttribute('i')],[ox,oy,sx,sy]=GRID[g];
  return `<style>:host{display:block;flex:none;width:${s}px;height:${s}px}svg{display:block;overflow:visible}path,rect,ellipse{vector-effect:non-scaling-stroke}</style>
  <svg width="${s}" height="${s}" preserveAspectRatio="none" viewBox="${(x-ox)*sx} ${(y-oy)*sy} ${s*sx} ${s*sy}">${art}</svg>`;
});

/* Text whose tracking is set so that it spans w px */
const pen=document.createElement('canvas').getContext('2d');
make('q-text',e=>{
  const s=+at(e,'s','25'),wt=e.hasAttribute('b')?700:400,t=e.textContent,w=+at(e,'w','0');
  pen.font=`${wt} ${s}px Inter, "Liberation Sans", sans-serif`;
  const ls=w?(w+1-pen.measureText(t).width)/t.length:+at(e,'ls','0');
  return `<style>:host{display:block;flex:none;white-space:pre;line-height:30px;font-size:${s}px;font-weight:${wt};letter-spacing:${ls.toFixed(3)}px;color:${at(e,'c','inherit')}}</style><slot></slot>`;
});
make('q-tri',e=>{
  const d=at(e,'d','down'),w=at(e,'w','15'),h=at(e,'h','8');
  const c={down:'0 0,100% 0,50% 100%',up:'0 100%,100% 100%,50% 0',left:'100% 0,100% 100%,0 50%',right:'0 0,0 100%,100% 50%'}[d];
  return `<style>:host{display:block;flex:none;width:${w}px;height:${h}px;background:${at(e,'c','#5a5a5a')};clip-path:polygon(${c})}</style>`;
});
make('title-bar',`<style>:host{display:flex;height:52px;flex:none;background:#f6f0f7;border-bottom:1px solid #cfcccf;align-items:center;padding-left:10px}
i{width:24px;height:24px;border-radius:50%;margin-right:16px;box-sizing:border-box;border:1px solid #0002;margin-top:-4px}
q-text{margin:-6px 0 0 688px}</style>
<i style="background:#ff5f57"></i><i style="background:#febc2e"></i><i style="background:#28c840"></i><q-text b s="25" w="315" c="#4b484c">*Untitled Project — QGIS</q-text>`);
make('q-toolbar',e=>`<style>:host{display:flex;box-sizing:border-box;flex:none;height:var(--h);padding-top:var(--p,0);border-bottom:2px solid #b2b2b2;border-right:1px solid #f4f4f4;background:linear-gradient(#f5f5f5,#ebebeb);align-items:center;overflow:hidden}
i{flex:none;width:8px;height:35px;margin-left:${e.hasAttribute('first')?4:10}px;margin-right:7px;background-image:conic-gradient(from 90deg at 2px 2px,transparent 75%,#c0c0c0 0);background-size:6px 6px}
b{flex:1}</style><i></i><slot></slot><b></b><slot name="end"></slot>`);
make('q-tool',e=>`<style>:host{display:flex;flex:none;width:66px;height:62px}
div{width:63px;height:62px;margin:auto;box-sizing:border-box;border:2px solid transparent;border-radius:5px;display:flex;align-items:center;justify-content:center}
.on{border-color:#a8a8a8;background:linear-gradient(#fdfdfd,#f8f8f8)}.down{border-color:#a8a8a8;background:#d9d9d9}</style><div class="${at(e,'state')}"><q-icon i="${at(e,'i')}"></q-icon></div>`);
make('q-drop','<style>:host{display:flex;flex:none;width:24px;justify-content:center}</style><q-tri h="8"></q-tri>');
make('q-more','<style>:host{display:block;flex:none;margin-right:6px}svg{display:block}</style><svg width="17" height="14"><path d="M1.500 1l5 6-5 6M9.500 1l5 6-5 6" fill="none" stroke="#3c3c3c" stroke-width="2.200"/></svg>');
make('q-wbtns',`<style>:host{display:flex;gap:6px}svg{display:block}</style>
<svg width="22" height="22"><rect x="1" y="1" width="20" height="20" rx="3" fill="none" stroke="#777670" stroke-width="2"/><path d="M9 8V5h8v8h-3M5 9h8v8H5z" fill="none" stroke="#777670" stroke-width="2"/></svg>
<svg width="22" height="22"><rect x="1" y="1" width="20" height="20" rx="3" fill="none" stroke="#777670" stroke-width="2"/><path d="M6 6l10 10M16 6L6 16" stroke="#6a6963" stroke-width="4"/></svg>`);
make('q-scroll',e=>{
  const v=e.hasAttribute('v'),[a,t,z]=at(e,'p').split(',');
  return `<style>:host{display:flex;flex:none;box-sizing:border-box;flex-direction:${v?'column':'row'};${v?'width:28px;border-left:1px solid #b8b8b8':'height:28px;border-top:1px solid #b8b8b8'};background:#e1e1e1}
  div{box-sizing:border-box;flex:none;display:flex;align-items:center;justify-content:center;background:linear-gradient(${v?'to right,':''}#fff,#efefef)}
  .a{${v?'height':'width'}:${a}px;border-${v?'bottom':'right'}:2px solid #bbb}.t{${v?'height':'width'}:${t}px;border-${v?'bottom':'right'}:2px solid #bbb}
  .s{flex:1;background:none}.z{${v?'height':'width'}:${z}px;border-${v?'top':'left'}:2px solid #bbb}</style>
  <div class="a"><q-tri d="${v?'up':'left'}" ${v?'':'w="8" h="15"'}></q-tri></div><div class="t"></div><div class="s"></div><div class="z"><q-tri d="${v?'down':'right'}" ${v?'':'w="8" h="15"'}></q-tri></div>`;
});
make('q-check','<style>:host{display:block;flex:none;width:24px;height:24px;background:#fff;border:2px solid #bcbcbc}svg{display:block}</style><svg width="24" height="24"><path d="M5 12l5 7L19 4" fill="none" stroke="#222" stroke-width="3"/></svg>');
make('q-radio',e=>`<style>:host{display:block;flex:none;width:28px;height:28px}svg{display:block}</style><svg width="28" height="28"><circle cx="14" cy="14" r="13" fill="#fff" stroke="#9c9c9c" stroke-width="1.800"/>${e.hasAttribute('on')?'<circle cx="14" cy="14" r="6" fill="#4a4a4a" stroke="#222"/>':''}</svg>`);
make('q-box','<style>:host{display:flex;flex:none;box-sizing:border-box;align-items:center;border:2px solid #a9a9a9;border-radius:5px;background:linear-gradient(#fff,#e9e9e9);overflow:hidden}:host([off]){border-color:#c2c2c2}:host([field]){background:linear-gradient(#fff,#fafafa)}:host([c]){justify-content:center}</style><slot></slot>');
const swatch=[16,13,10,7,4,2].map((r,k)=>[r,['#98c284','#a9cd98','#bddaae','#d2e6c8','#e9f3e4','#fff'][k]]);
make('q-swatch',e=>`<style>:host{display:block;flex:none;width:32px;height:32px}svg{display:block}</style><svg width="32" height="32">${at(e,'k')==='c'?swatch.map(([r,c])=>`<circle cx="16" cy="16" r="${r*.72}" fill="${c}"/>`).join(''):swatch.map(([r,c])=>`<rect x="${16-r}" y="${16-r}" width="${2*r}" height="${2*r}" fill="${c}"/>`).join('')}</svg>`);

/* Left docks */
const tr=(i,t,a,x)=>`<div class="r"><span>${a?'<q-tri d="right" w="8" h="15"></q-tri>':''}</span><q-icon i="${i}"></q-icon><q-text ${x}>${t}</q-text></div>`;
make('left-docks',`<style>:host{display:flex;flex:none;width:300px}
.col{width:287px;display:flex;flex-direction:column;flex:none}
.h{display:flex;justify-content:space-between;align-items:center;height:22px;padding:0 3px 0 2px;flex:none}
.tb{display:flex;align-items:center;flex:none}
.tree{display:flex;height:289px;border:1px solid #b8b8b8;border-width:1px 1px 0 0;background:#fff;flex:none;margin-top:16px}
.rows{width:258px;flex:none;overflow:hidden;padding-top:1px}
.r{display:flex;height:36px;align-items:center;overflow:hidden}
.r span{width:34px;flex:none;padding-left:8px;box-sizing:border-box}
.r q-text{margin-left:12px}
.hs{display:flex;border-right:1px solid #b8b8b8;border-bottom:2px solid #b8b8b8;height:28px;flex:none}
.cor{flex:1;border-left:1px solid #b8b8b8;border-top:1px solid #b8b8b8}
.g{height:3px;width:34px;margin:5px 0 0 127px;background-image:conic-gradient(from 90deg at 3px 3px,transparent 75%,#c0c0c0 0);background-size:6px 6px;flex:none}
.btn{width:48px;height:45px;box-sizing:border-box;border:2px solid #a8a8a8;border-radius:5px;background:#d9d9d9;display:flex;align-items:center;justify-content:center;margin-left:2px;flex:none}
.list{height:484px;border-top:2px solid #b8b8b8;border-right:1px solid #b8b8b8;background:#fff;overflow:hidden;flex:none;margin-top:9px;box-sizing:content-box}
.sel{background:#dcdcdc;color:#000}
.ind{width:31px;height:30px;border:1px solid #ccc;border-radius:4px;background:#fafafa;margin:0 -33px 0 0;flex:none;z-index:1;display:flex;align-items:center;position:relative;left:118px}
.vg{width:4px;height:34px;margin:513px 0 0 5px;background-image:conic-gradient(from 90deg at 3px 3px,transparent 75%,#c0c0c0 0);background-size:6px 6px}
</style>
<div class="col">
<div class="h" style="margin-top:11px"><q-text s="20.800" w="84">Browser</q-text><q-wbtns></q-wbtns></div>
<div class="tb" style="margin:22px 0 0 10px;gap:18px"><q-icon i="addlayer"></q-icon><q-icon i="refresh2"></q-icon><q-icon i="filter"></q-icon><q-icon i="collapse"></q-icon><q-icon i="info"></q-icon></div>
<div class="tree"><div class="rows">
${tr('folder','/Volumes',1,'w="114"')}${tr('fav','Favorites',1,'w="110"')}${tr('bms','Spatial Bookmarks',1,'ls=".4"')}${tr('home','Home',1,'w="69"')}${tr('folder','/ (Macintosh HD)',1,'ls=".1"')}${tr('gp','GeoPackage',0,'w="151"')}${tr('sl','SpatiaLite',0,'w="119"')}${tr('pg','PostgreSQL',1,'w="144"')}
</div><q-scroll v p="26,96,30"></q-scroll></div>
<div class="hs"><q-scroll style="width:258px" p="22,137,29"></q-scroll><div class="cor"></div></div>
<div class="g"></div>
<div class="h" style="margin-top:13px"><q-text s="20.800" w="67">Layers</q-text><q-wbtns></q-wbtns></div>
<div class="tb" style="margin-top:16px;height:45px"><div class="btn"><q-icon i="brush2"></q-icon></div><q-icon i="group" style="margin-left:10px"></q-icon><q-icon i="eye" style="margin-left:18px"></q-icon><q-icon i="filter2" style="margin-left:14px"></q-icon><q-more style="margin-left:67px"></q-more></div>
<div class="list">
<div class="r"><q-check style="margin-left:42px"></q-check><q-text b ls=".95" style="margin-left:56px">waste_by_station</q-text></div>
<div class="r"><q-icon i="tbl" style="margin-left:43px"></q-icon><q-text b ls=".5" style="margin-left:11px">waste_disposal_</q-text></div>
<div class="r"><q-check style="margin-left:42px"></q-check><svg width="56" height="20"><circle cx="27.500" cy="10" r="3" fill="#7a1f87" stroke="#3c1044" stroke-width=".8"/></svg><div class="ind"><q-icon i="fnl"></q-icon></div><q-text b ls=".75" style="margin-left:2px">landfill_sites</q-text></div>
<div class="r sel"><q-check style="margin-left:42px"></q-check><svg width="56" height="32"><rect x="12.500" y=".5" width="31" height="31" fill="#a9a9a9" stroke="#bbb"/></svg><q-text b w="77" style="margin-left:0;text-decoration:underline;text-decoration-thickness:2px;text-underline-offset:4px">wards</q-text></div>
</div>
<div class="hs"><q-scroll style="width:286px" p="22,77,29"></q-scroll></div>
</div><div class="vg"></div>`);

/* Map */
const inner1=`557,239 560,265 571,285 552,313 537,313 528,296 514,323 490,308 463,288 455,306 465,310 472,348 454,390 436,374 432,400 410,422 388,452 388,490 374,522 365,555 330,505 307,470 290,553|688,421 586,680 570,768 562,820 570,990 572,1110 555,1190 540,1250 535,1310 540,1380 558,1450 561,1568|362,757 395,722 437,670 475,649 489,688 490,800 498,845 510,849 535,795 570,768|418,1115 435,1077 448,1110 470,1098 545,1086 568,1118|508,1116 523,1160 545,1152 555,1178|434,1159 458,1168 475,1145 508,1116 545,1086|453,1230 470,1245 477,1272 495,1245 520,1235 540,1243|460,1318 490,1332 524,1340 522,1365 465,1450 440,1460 392,1472|572,1108 590,1110 588,1160 580,1185 592,1300 572,1350 578,1375|588,1160 605,1190 628,1213 635,1245 660,1303 670,1370|628,1213 680,1172 718,1185 735,1228 750,1278 737,1365|718,1185 740,1165 728,1132 752,1130 770,1177 800,1160 830,1155 882,1080 883,1105 914,1106 908,1074 971,1063 1010,1112 1025,1108|853,1125 858,1170 852,1262 830,1280 830,1296|803,1158 810,1185 825,1187 822,1160|745,1255 760,1225 806,1215|808,1185 807,1240 798,1315|993,1178 960,1190 905,1225 808,1320 737,1365 670,1373|671,1370 652,1356 605,1370 578,1378 535,1360 522,1365|925,1250 850,1330 828,1348 812,1335|912,1270 928,1315 915,1345 935,1382|808,1320 819,1390 803,1448 790,1490 780,1568|850,1340 872,1340 886,1370 887,1415 893,1420|605,1372 615,1415 628,1428 664,1415 665,1400 720,1410 735,1385 750,1384 757,1413 785,1430 820,1473 855,1450 865,1490 883,1472|735,1432 775,1425|735,1432 730,1490 680,1545 664,1400|610,1408 585,1415 588,1440 558,1458 435,1485|588,1440 606,1475 668,1470|640,1478 650,1530|440,1460 435,1485 452,1530 460,1568|280,1425 300,1455 262,1510 275,1560|300,1455 318,1450 320,1475 300,1500 315,1515 340,1500 375,1505 410,1495 435,1485|360,1508 360,1568|340,708 328,708 334,700`;
const inner2=`363,188 360,215 365,250 300,340 285,305 300,280 275,215 262,190|365,250 400,245 450,240|370,262 390,300 385,350 418,395|442,245 435,290 420,330 420,395|450,240 470,300 460,390|435,163 453,240 480,245 485,340 522,395|178,397 210,388 235,400 245,388 297,418 295,445 330,505|300,340 312,360 297,380 297,418|295,445 255,465 253,505 216,555|235,530 245,580 290,655|290,735 292,790 355,860|172,775 195,822 228,803 228,825 263,850 302,808|415,397 500,395 555,388 620,397 700,383 735,393|422,397 422,420|480,397 476,410|520,397 522,415|390,435 400,432|530,240 600,270 620,300 640,330|495,275 590,300 650,345 735,395 845,465 905,507|485,245 490,290|505,280 508,320 550,335 555,388|595,310 605,400 640,510|605,325 600,395|622,325 628,360 622,395|635,335 638,365 632,395|585,320 580,345 555,352|518,208 550,212 600,216 598,250 575,258 572,270|508,234 520,205|550,212 548,240|575,258 540,272 536,288|605,220 645,250 655,300 645,350|605,240 606,200 645,197|680,222 690,205 740,195|720,245 780,250|735,210 720,245 718,280 700,320 693,365|785,205 770,330 735,395 700,440 620,462|718,280 735,320 722,350 755,350|735,320 735,285 775,290|735,320 790,330|785,205 830,220 845,240 860,238 865,180|845,240 828,290 830,340 845,380|830,275 820,295 793,295 797,335 830,400 845,400 845,335 870,360 905,350 912,385 945,458|845,400 850,430 912,390|850,430 845,465|942,460 905,507 893,548 940,600 938,615|735,395 732,440 738,490 740,515 720,530 750,590 765,590 765,612|735,445 780,440 785,480 775,525 820,508|670,480 685,475 690,540 720,520 735,488 690,500|640,520 672,522 695,590 675,595|712,612 712,565 725,560|650,400 680,400 685,440 700,500|620,400 640,400 650,425 625,430|605,400 625,420 655,410|640,445 655,425 670,430|765,560 790,600 805,610|775,525 800,570 828,585 830,558 852,555 850,612|845,515 870,545 893,540|785,480 820,480 820,505 850,515 860,490|790,430 800,445 810,475 800,478|750,410 760,430 790,440|820,508 850,555|1050,575 1023,638 1050,660|1035,550 1128,640 1125,655 1150,695 1195,745 1290,797 1305,790 1308,775 1317,795 1303,845 1325,855 1369,850|1180,515 1183,605 1165,605 1150,620 1138,618 1128,640|1150,695 1132,725 1137,745 1115,755|1195,745 1175,770 1155,765 1145,805|1200,748 1185,730 1168,733 1165,750 1185,760`;
const lines=s=>s.split('|').map(p=>'M'+p.replace(/ /g,'L')).join('');
const north='243,1568 243,1557 234,1540 241,1528 238,1505 244,1490 244,1475 258,1460 262,1440 280,1425 284,1408 300,1402 316,1402 314,1411 324,1410 320,1420 340,1415 335,1425 362,1462 375,1470 388,1462 372,1430 392,1445 412,1443 428,1430 445,1385 452,1345 458,1310 457,1260 450,1225 440,1185 425,1140 413,1113 400,1098 396,1080 380,1030 370,975 365,935 364,912 355,890 355,878 368,858 370,835 366,795 358,748 348,705 335,655 320,620 300,590 292,560 280,540 262,528 243,524 234,505 233,485 222,465 206,464 211,435 205,405 195,390 178,373 174,335 209,306 209,285 228,233 245,203 264,181 291,198 337,188 362,149 384,90 393,64 428,78 450,84 473,96 495,120 505,142 525,164 523,210 526,233 557,239 575,232 601,227 625,251 631,332 611,348 621,381 684,420 705,417 713,510 723,543 757,577 776,573 800,616 843,670 848,719 874,719 885,705 925,735 933,738 962,706 966,670 977,668 983,620 1011,620 1029,583 1097,597 1062,690 1043,715 1047,760 1045,801 1075,797 1097,803 1095,830 1090,850 1117,899 1073,907 1073,962 1068,970 1034,987 1073,1032 1048,1086 1025,1108 1033,1153 993,1178 993,1194 965,1196 965,1250 951,1275 952,1325 964,1358 960,1384 949,1368 935,1382 930,1380 897,1404 893,1420 883,1472 915,1485 930,1500 948,1506 937,1530 930,1568';
const south='238,185 234,215 242,235 240,270 232,310 215,335 195,350 180,365 178,395 170,420 162,430 157,462 140,472 118,474 123,482 109,510 135,525 145,550 170,577 183,565 186,540 200,530 213,537 216,555 226,580 218,605 204,622 200,650 192,663 202,690 202,720 196,765 188,782 172,775 162,802 140,808 130,835 150,870 170,928 178,933 192,926 215,950 226,975 233,998 230,1020 245,1085 245,1125 250,1160 248,1175 255,1195 249,1218 264,1232 270,1260 290,1300 294,1315 290,1328 318,1355 325,1375 345,1397 372,1414 390,1414 400,1425 408,1445 430,1478 442,1470 455,1466 474,1474 450,1445 423,1425 415,1385 405,1360 409,1345 405,1340 415,1290 418,1265 430,1232 416,1210 416,1192 434,1165 430,1095 416,1068 408,1030 393,995 370,975 341,973 335,950 338,925 348,900 348,875 355,865 480,800 680,622 720,615 770,611 840,615 850,610 900,612 960,622 1010,643 1050,668 1080,695 1100,735 1120,765 1140,800 1160,840 1184,873 1175,885 1120,915 1093,945 1090,975 1110,1010 1117,1040 1115,1055 1150,1100 1158,1125 1160,1165 1152,1200 1145,1210 1160,1203 1180,1188 1185,1170 1207,1142 1200,1088 1234,1101 1247,1075 1245,1048 1263,1048 1270,1032 1285,1032 1300,1015 1304,988 1312,985 1325,965 1350,948 1350,922 1366,930 1400,859 1369,852 1371,815 1332,810 1350,760 1375,700 1447,617 1409,498 1378,640 1368,615 1375,570 1384,548 1380,515 1380,452 1360,425 1330,402 1299,390 1284,405 1281,425 1286,433 1265,450 1245,467 1220,470 1208,461 1195,478 1192,495 1172,502 1170,512 1135,530 1120,530 1110,518 1090,510 1065,545 1080,550 1075,578 1068,552 1035,550 1000,530 970,495 945,458 960,405 940,370 948,352 918,295 935,210 948,183';
make('map-canvas',`<style>:host{display:block;flex:none;width:753px;height:1048px;margin-top:3px;box-sizing:border-box;border:1px solid #b8b8b8;border-bottom-width:2px;background:#fff}svg{display:block}path,polyline{vector-effect:non-scaling-stroke;stroke-linejoin:round}</style>
<svg width="751" height="1045" viewBox="301 287 751 1045"><defs><radialGradient id="r"><stop offset="0" stop-color="#fff"/><stop offset="1" stop-color="#85b56f"/></radialGradient><radialGradient id="r2"><stop offset="0" stop-color="#fff"/><stop offset=".3" stop-color="#f0f6ec"/><stop offset="1" stop-color="#8dbb77"/></radialGradient></defs>
<g fill="#a9a9a9" stroke="#c4c4c4" stroke-width="1.500">
<g transform="translate(300 760) scale(.48468 .36990)"><polyline points="${south}"/></g>
<g transform="translate(300 290) scale(.48468 .35714)"><polyline points="${north}"/><path d="M205,1095L215,1065 224,1058 235,1070 245,1083 241,1105 250,1120 253,1140 245,1152 231,1156 212,1140Z"/></g></g>
<g fill="none" stroke="#c6c6c6" stroke-width="1.500">
<g transform="translate(300 290) scale(.48468 .35714)"><path d="${lines(inner1)}"/><path d="M318,1415L352,1397M345,1402L335,1412M362,1412L378,1425 390,1450M340,1410L366,1448"/></g>
<g transform="translate(300 760) scale(.48468 .36990)"><path d="${lines(inner2)}"/><path d="M352,972V958Q360,950 368,960V972M358,960V972"/></g></g>
<circle cx="534.600" cy="1006" r="95" fill="url(#r)"/><circle cx="753" cy="723" r="14" fill="url(#r2)"/><circle cx="669" cy="827" r="11.500" fill="url(#r2)"/>
<g fill="#7b1b8c" stroke="#2f1a33" stroke-width="1.600"><circle cx="571.500" cy="655" r="5.500"/><circle cx="572" cy="647.500" r="5.500"/><circle cx="546.300" cy="846.500" r="5.500"/><circle cx="670.300" cy="959.800" r="5.500"/></g></svg>`);

/* Styling panel */
const cbtn=(bg,off='',rd=5)=>`<q-box ${off} style="width:436px;height:56px"><div style="width:416px;height:32px;margin:0 0 0 8px;border-radius:${rd}px;background:${bg}"></div></q-box><q-box c ${off} style="width:24px;height:56px"><q-tri></q-tri></q-box>`;
const ddb='<q-icon i="dd" style="margin-left:16px"></q-icon>';
make('styling-panel',`<style>:host{display:flex;flex-direction:column;width:886px;margin-left:19px;flex:none;position:relative}
.h{display:flex;justify-content:space-between;height:22px;align-items:center;padding-left:2px;margin-top:11px;flex:none}
.body{display:flex;height:926px;margin-top:24px;flex:none}
.side{width:76px;flex:none;display:flex;flex-direction:column}
.side>q-icon{margin:-4px 0 0 6px}
.dark{background:#5c5c5c;height:866px;margin-top:6px;padding:8px 0 0 6px;display:flex;flex-direction:column;gap:16px;color:#222}
.dark q-icon:nth-child(2){margin-top:-1px}
.content{margin-left:6px;width:802px;display:flex;flex-direction:column}
.top{display:flex;height:223px;margin-top:12px;flex:none}
.cross{width:200px;height:200px;margin-top:12px;flex:none}
.tree{width:451px;height:221px;border:1px solid #b8b8b8;background:#fff;margin-left:12px;flex:none}
.t{display:flex;height:36px;align-items:center}
.t.sel{background:#dcdcdc;color:#000}
.btns{display:grid;grid-template-columns:56px 56px;grid-auto-rows:48px;gap:8px 12px;margin-left:13px;align-content:start}
.sep{height:1px;background:#bdbdbd;border-bottom:2px solid #fdfdfd;margin-top:13px;flex:none}
.area{display:flex;height:479px;flex:none}
.sc{width:774px;height:479px;overflow:hidden;flex:none;display:flex;flex-direction:column}
.f{display:flex;align-items:center;flex:none}
.f q-radio{margin-left:20px;margin-right:12px}
.f>q-text{padding-top:2px}
.foot{display:flex;align-items:center;height:48px;margin-top:12px;flex:none}
.red{position:absolute;border:3px solid #ff2a0a;box-sizing:border-box}
</style>
<div class="h"><q-text s="20.800" w="134.500">Layer Styling</q-text><q-wbtns></q-wbtns></div>
<q-box style="width:884px;height:48px;margin-top:14px;color:#000"><q-icon i="pts" style="margin-left:12px"></q-icon><q-text w="442" style="margin-left:4px">waste_by_station_september _2023</q-text><q-tri style="margin:-3px 13px 0 auto"></q-tri></q-box>
<div class="body"><div class="side"><q-icon i="brush"></q-icon><div class="dark"><q-icon i="lab"></q-icon><q-icon i="mask"></q-icon><q-icon i="cube"></q-icon><q-icon i="brushes"></q-icon><q-icon i="hist"></q-icon></div></div>
<div class="content">
<q-box style="width:802px;height:48px;color:#000"><q-icon i="single" style="margin-left:12px"></q-icon><q-text w="171.500" style="margin-left:4px;padding-top:1px">Single Symbol</q-text><q-tri style="margin:-3px 13px 0 auto"></q-tri></q-box>
<div class="top"><svg class="cross" viewBox="0 0 200 200"><path d="M0 100.700H200M101 0V200" stroke="#9b9b9f" stroke-width="2"/><circle cx="101.700" cy="102" r="11" fill="#a3cb91"/><circle cx="101.700" cy="102" r="8.500" fill="#b7d7a8"/><circle cx="101.700" cy="102" r="5.500" fill="#dcebd4"/><circle cx="101.700" cy="102" r="2.500" fill="#fff"/></svg>
<div class="tree"><div style="height:1px"></div>
<div class="t"><q-tri style="margin-left:14px"></q-tri><q-swatch k="c" style="margin-left:18px"></q-swatch><q-text b w="89" style="margin-left:12px">Marker</q-text></div>
<div class="t"><q-tri style="margin-left:54px"></q-tri><q-swatch k="c" style="margin-left:18px"></q-swatch><q-text w="154" style="margin-left:12px">Filled Marker</q-text></div>
<div class="t"><q-tri style="margin-left:94px"></q-tri><q-swatch style="margin-left:18px"></q-swatch><q-text b w="35.500" style="margin-left:12px">Fill</q-text></div>
<div class="t sel"><q-swatch style="margin-left:167px"></q-swatch><q-text w="179" style="margin-left:12px">Shapeburst Fill</q-text></div></div>
<div class="btns"><q-box c><q-icon i="add"></q-icon></q-box><q-box c off><q-icon i="up"></q-icon></q-box><q-box c off><q-icon i="rem"></q-icon></q-box><q-box c off><q-icon i="down"></q-icon></q-box><q-box c><q-icon i="dup"></q-icon></q-box><q-box c><q-icon i="lock"></q-icon></q-box></div></div>
<div class="sep"></div>
<div class="area"><div class="sc">
<div class="f" style="margin-top:17px"><q-text w="215" style="margin-left:2px;width:220px">Symbol layer type</q-text><q-box style="width:546px;height:48px;color:#000"><q-text w="179" style="margin-left:8px;padding-top:2px">Shapeburst Fill</q-text><q-tri style="margin:0 14px 0 auto"></q-tri></q-box></div>
<div class="f" style="margin-top:23px;height:36px"><q-text b w="203" style="margin-left:20px">Gradient Colors</q-text></div>
<div class="f" style="margin-top:9px"><q-radio on></q-radio><q-text w="119.500" style="width:158px">Two color</q-text>${cbtn('#85b56f')}${ddb}</div>
<div class="f" style="margin-top:12px"><div style="width:218px;flex:none"></div>${cbtn('#fff')}${ddb}</div>
<div class="f" style="margin-top:12px"><q-radio></q-radio><q-text w="133.500" style="width:158px">Color ramp</q-text>${cbtn('linear-gradient(to right,#c1c4bf,#d9dacf)','off',0)}</div>
<div class="f" style="margin-top:10px;height:36px"><q-text b w="178.500" style="margin-left:20px">Shading Style</q-text></div>
<div class="f" style="margin-top:8px;height:56px"><q-radio on></q-radio><q-text w="155.500" style="width:618px">Whole shape</q-text>${ddb}</div>
<div class="f" style="margin-top:12px;height:48px"><q-radio></q-radio><q-text w="150" style="width:174px">Set distance</q-text>
<q-box field style="width:186px;height:48px"><q-text w="55" c="#bdbdbd" style="margin-left:9px;width:144px;padding-top:2px">5.00</q-text><div style="width:30px;height:48px;border-left:2px solid #b5b5b5;display:flex;flex-direction:column;align-items:center;justify-content:center;gap:10px"><q-tri d="up"></q-tri><q-tri></q-tri></div></q-box>
<q-box off style="width:246px;height:48px;margin-left:12px"><q-text w="130" c="#989898" style="margin-left:9px;padding-top:2px">Millimeters</q-text><q-tri c="#b4b4b4" style="margin:0 13px 0 auto"></q-tri></q-box>${ddb}</div>
</div><q-scroll v p="26,229,28" style="margin-top:15px"></q-scroll></div>
<div class="f" style="height:28px"><q-scroll style="width:774px" p="27,706,29"></q-scroll><div style="width:26px;height:26px;border:1px solid #b8b8b8"></div></div>
<div class="f" style="margin-top:25px;height:36px"><svg width="16" height="26" style="margin-left:9px"><path d="M2 2V23L14 12.500Z" fill="#555" stroke="#222" stroke-width="2"/></svg><q-text b w="208" style="margin-left:20px">Layer Rendering</q-text></div>
<div class="foot"><q-box c style="width:48px;height:47px"><q-icon i="ub"></q-icon></q-box><q-box c style="width:48px;height:47px;margin-left:12px"><q-icon i="rb"></q-icon></q-box><q-check style="margin-left:330px"></q-check><q-text w="141" style="margin-left:10px">Live update</q-text><q-box c style="width:160px;height:48px;margin-left:auto;color:#000"><q-text w="68">Apply</q-text></q-box></div>
</div></div>
<div class="red" style="left:299px;top:426px;width:557px;height:65px"></div><div class="red" style="left:94px;top:540px;width:675px;height:143px"></div>`);

/* Status bar */
const spin=(t,w)=>`<q-box field style="width:185px;height:46px"><q-text s="22.500" w="${w}" style="margin-left:9px;width:143px">${t}</q-text><div style="width:28px;height:46px;border-left:2px solid #b5b5b5;display:flex;flex-direction:column;align-items:center;justify-content:center;gap:9px"><q-tri d="up"></q-tri><q-tri></q-tri></div></q-box>`;
make('status-bar',`<style>:host{display:flex;flex:none;height:54px;align-items:center;background:linear-gradient(#ebebeb,#d9d9d9);box-sizing:border-box;padding-left:2px}
.cut{overflow:hidden;flex:none;display:flex}
.dots{width:20px;height:20px;margin:34px 0 0 33px;background-image:conic-gradient(from 90deg at 3px 3px,transparent 75%,#b4b4b4 0);background-size:6px 6px;clip-path:polygon(100% 0,100% 100%,0 100%)}</style>
<q-box field style="width:428px;height:47px;color:#7a7a7a"><q-icon i="find" style="margin-left:14px"></q-icon><q-text s="24.500" w="238" style="margin-left:10px">Type to locate (⌘K)</q-text></q-box>
<div class="cut" style="width:15px;margin-left:60px"><q-text s="22.500">di</q-text></div>
<q-box field style="width:237px;height:45px;margin-left:7px"><q-text s="22.500" w="197" style="margin-left:16px">2121419,-4018002</q-text></q-box>
<q-icon i="mouse" style="margin-left:8px"></q-icon>
<div class="cut" style="width:9px;margin-left:24px;justify-content:flex-end"><q-text s="22.500">a</q-text></div>
<q-box field style="width:184px;height:48px;margin-left:7px"><q-text s="22.500" w="106" style="margin-left:6px;width:135px">1:1356978</q-text><div style="width:40px;height:48px;border-left:1px solid #aaa;display:flex;align-items:center;justify-content:center;background:linear-gradient(#fff,#e9e9e9)"><q-tri></q-tri></div></q-box>
<q-icon i="plock" style="margin-left:19px"></q-icon>
<div class="cut" style="width:9px;margin-left:11px"><q-text s="22.500">r</q-text></div><div style="width:6px"></div>${spin('100%',57)}
<div class="cut" style="width:7px;margin-left:18px;justify-content:flex-end"><q-text s="22.500">a</q-text></div><div style="width:21px"></div>${spin('0.0 °',49)}
<q-check style="margin-left:13px"></q-check><q-text s="22.500" w="73" style="margin-left:10px">Render</q-text>
<q-icon i="crs" style="margin-left:30px"></q-icon><q-text s="22.500" w="119" c="#111" style="margin-left:2px">EPSG:3857</q-text>
<q-icon i="msg" style="margin-left:44px"></q-icon><div class="dots"></div>`);
</script>
</body>
</html>
